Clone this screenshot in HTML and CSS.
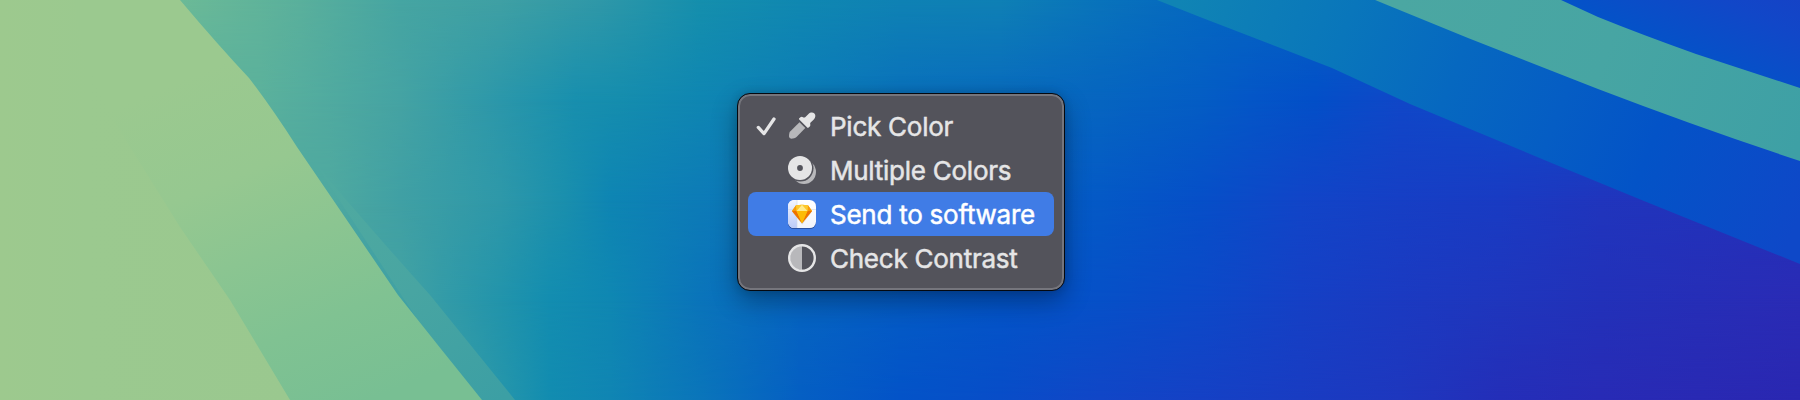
FILE: index.html
```html
<!DOCTYPE html>
<html lang="en">
<head>
<meta charset="utf-8">
<title>Color menu</title>
<link rel="stylesheet" href="styles.css">
</head>
<body>
<main class="desktop">
  <svg class="wallpaper" viewBox="0 0 1800 400" preserveAspectRatio="none" aria-hidden="true">
    <defs>
      <linearGradient id="r0" gradientUnits="userSpaceOnUse" x1="0" y1="0" x2="1800" y2="0">
        <stop offset=".1" stop-color="#6cba97"/><stop offset=".1667" stop-color="#5ab09c"/><stop offset=".2222" stop-color="#46a5a2"/><stop offset=".2778" stop-color="#3fa0a4"/><stop offset=".3333" stop-color="#2f98a8"/><stop offset=".3889" stop-color="#158fad"/><stop offset=".4444" stop-color="#1088b1"/><stop offset=".5" stop-color="#0f82b4"/><stop offset=".5556" stop-color="#0f80b5"/><stop offset=".6111" stop-color="#0973bb"/><stop offset=".6667" stop-color="#0568c0"/><stop offset=".85" stop-color="#0353c8"/><stop offset=".92" stop-color="#0f48c8"/><stop offset="1" stop-color="#193ec4"/>
      </linearGradient>
      <linearGradient id="r1" gradientUnits="userSpaceOnUse" x1="0" y1="0" x2="1800" y2="0">
        <stop offset=".1444" stop-color="#5bb19c"/><stop offset=".2222" stop-color="#45a3a3"/><stop offset=".2778" stop-color="#2b97aa"/><stop offset=".3194" stop-color="#188fae"/><stop offset=".3444" stop-color="#158dae"/><stop offset=".3889" stop-color="#0f86b2"/><stop offset=".4444" stop-color="#0c7cb7"/><stop offset=".5" stop-color="#0970bc"/><stop offset=".5556" stop-color="#086abe"/><stop offset=".6111" stop-color="#0665c0"/><stop offset=".6667" stop-color="#045dc4"/><stop offset=".6944" stop-color="#0456c7"/><stop offset=".7306" stop-color="#034fc8"/><stop offset=".7778" stop-color="#1047c8"/><stop offset=".95" stop-color="#0b4dc8"/><stop offset="1" stop-color="#1148c8"/>
      </linearGradient>
      <linearGradient id="r2" gradientUnits="userSpaceOnUse" x1="0" y1="0" x2="1800" y2="0">
        <stop offset=".1833" stop-color="#4fa9a0"/><stop offset=".2222" stop-color="#40a0a4"/><stop offset=".2778" stop-color="#2e98a9"/><stop offset=".3139" stop-color="#1a8fad"/><stop offset=".3389" stop-color="#0e85b3"/><stop offset=".3889" stop-color="#0d7bb7"/><stop offset=".4444" stop-color="#0a70bc"/><stop offset=".5" stop-color="#0766c0"/><stop offset=".5556" stop-color="#055ec4"/><stop offset=".6111" stop-color="#0459c6"/><stop offset=".6667" stop-color="#064fc8"/><stop offset=".7222" stop-color="#1145c8"/><stop offset=".7778" stop-color="#163fc5"/><stop offset=".8333" stop-color="#193bc3"/><stop offset=".8889" stop-color="#2035bd"/><stop offset="1" stop-color="#2430b9"/>
      </linearGradient>
      <linearGradient id="r3" gradientUnits="userSpaceOnUse" x1="0" y1="0" x2="1800" y2="0">
        <stop offset=".2222" stop-color="#42a2a3"/><stop offset=".25" stop-color="#319aa8"/><stop offset=".2778" stop-color="#2294ab"/><stop offset=".3056" stop-color="#138db0"/><stop offset=".3389" stop-color="#0f87b2"/><stop offset=".3889" stop-color="#0a74ba"/><stop offset=".4444" stop-color="#0664c1"/><stop offset=".5" stop-color="#045bc5"/><stop offset=".5556" stop-color="#0354c8"/><stop offset=".6111" stop-color="#0650c8"/><stop offset=".6667" stop-color="#0c49c8"/><stop offset=".7222" stop-color="#1540c5"/><stop offset=".7778" stop-color="#1b3ac1"/><stop offset=".8333" stop-color="#1f36bd"/><stop offset=".8889" stop-color="#2231b9"/><stop offset="1" stop-color="#2a2bb5"/>
      </linearGradient>
      <linearGradient id="r4" gradientUnits="userSpaceOnUse" x1="0" y1="0" x2="1800" y2="0">
        <stop offset=".25" stop-color="#3a9fa5"/><stop offset=".2861" stop-color="#2093ac"/><stop offset=".3056" stop-color="#128cb0"/><stop offset=".3389" stop-color="#1085b3"/><stop offset=".3889" stop-color="#0a75ba"/><stop offset=".4444" stop-color="#055fc3"/><stop offset=".5" stop-color="#0353c8"/><stop offset=".5556" stop-color="#084dc8"/><stop offset=".6111" stop-color="#1146c7"/><stop offset=".6667" stop-color="#1541c5"/><stop offset=".7222" stop-color="#193cc2"/><stop offset=".7778" stop-color="#1e37be"/><stop offset=".8333" stop-color="#242eb8"/><stop offset=".8889" stop-color="#282bb5"/><stop offset="1" stop-color="#2a27b1"/>
      </linearGradient>
      <linearGradient id="fade" x1="0" y1="0" x2="0" y2="1"><stop offset="0" stop-color="#fff" stop-opacity="0"/><stop offset="1" stop-color="#fff"/></linearGradient>
      <mask id="m1" style="mask-type: alpha" maskUnits="userSpaceOnUse" x="0" y="0" width="1800" height="400"><rect width="1800" height="100" fill="url(#fade)"/><rect y="100" width="1800" height="300" fill="#fff"/></mask>
      <mask id="m2" style="mask-type: alpha" maskUnits="userSpaceOnUse" x="0" y="100" width="1800" height="300"><rect y="100" width="1800" height="100" fill="url(#fade)"/><rect y="200" width="1800" height="200" fill="#fff"/></mask>
      <mask id="m3" style="mask-type: alpha" maskUnits="userSpaceOnUse" x="0" y="200" width="1800" height="200"><rect y="200" width="1800" height="100" fill="url(#fade)"/><rect y="300" width="1800" height="100" fill="#fff"/></mask>
      <mask id="m4" style="mask-type: alpha" maskUnits="userSpaceOnUse" x="0" y="300" width="1800" height="100"><rect y="300" width="1800" height="100" fill="url(#fade)"/></mask>
      <linearGradient id="sliver" gradientUnits="userSpaceOnUse" x1="329" y1="180" x2="500" y2="400"><stop offset="0" stop-color="#50aaa0"/><stop offset=".5" stop-color="#48a5a2"/><stop offset="1" stop-color="#3c9fa4"/></linearGradient>
      <linearGradient id="leaf" gradientUnits="userSpaceOnUse" x1="230" y1="60" x2="370" y2="400"><stop offset="0" stop-color="#9bc98f"/><stop offset=".3" stop-color="#96c890"/><stop offset=".52" stop-color="#8bc591"/><stop offset=".75" stop-color="#80c292"/><stop offset="1" stop-color="#78bf93"/></linearGradient>
      <linearGradient id="meadow" gradientUnits="userSpaceOnUse" x1="0" y1="0" x2="290" y2="0"><stop offset="0" stop-color="#9dc98e"/><stop offset=".3" stop-color="#9bc98f"/><stop offset="1" stop-color="#9ac88f"/></linearGradient>
      <linearGradient id="bandBlue" gradientUnits="userSpaceOnUse" x1="1180" y1="0" x2="1790" y2="240"><stop offset="0" stop-color="#1084b4"/><stop offset=".25" stop-color="#0976bb"/><stop offset=".43" stop-color="#0668c0"/><stop offset=".6" stop-color="#055dc4"/><stop offset=".75" stop-color="#0353c7"/><stop offset="1" stop-color="#0e48c8"/></linearGradient>
      <linearGradient id="bandTeal" gradientUnits="userSpaceOnUse" x1="1400" y1="0" x2="1800" y2="140"><stop offset="0" stop-color="#4ba7a2"/><stop offset=".5" stop-color="#47a5a3"/><stop offset="1" stop-color="#3ea0a5"/></linearGradient>
      <linearGradient id="corner" gradientUnits="userSpaceOnUse" x1="1660" y1="50" x2="1720" y2="-80"><stop offset="0" stop-color="#0353c8"/><stop offset=".5" stop-color="#1147c8"/><stop offset="1" stop-color="#1a3ec4"/></linearGradient>
    </defs>
    <rect width="1800" height="400" fill="url(#r0)"/>
    <rect width="1800" height="400" fill="url(#r1)" mask="url(#m1)"/>
    <rect width="1800" height="400" fill="url(#r2)" mask="url(#m2)"/>
    <rect width="1800" height="400" fill="url(#r3)" mask="url(#m3)"/>
    <rect width="1800" height="400" fill="url(#r4)" mask="url(#m4)"/>
    <path fill="url(#sliver)" d="M300 140 329 180Q385 245 430 295L515 400H470Z"/>
    <path fill="url(#leaf)" d="M0 0H180Q218 45 249 78Q272 108 297 147L398 295Q440 348 482 400H0Z"/>
    <path fill="url(#meadow)" d="M0 0H75Q80 70 132 150L180 227 230 300 290 400H0Z"/>
    <path fill="url(#corner)" d="M1550 0H1800V95L1690 60Z"/>
    <path fill="url(#bandBlue)" d="M1157 0 1200 17 1332 68 1410 104 1554 164 1644 201 1800 264V150L1375 0Z"/>
    <path fill="url(#bandTeal)" d="M1375 0 1468 38 1598 89Q1700 128 1800 161V88L1696 54Q1640 34 1598 17L1561 0Z"/>
  </svg>

  <ul class="menu" role="menu">
    <li class="item" role="menuitem">
      <svg class="check" viewBox="0 0 20 20"><path d="M2.3 11.400 8 17.600 18 3" fill="none" stroke="currentColor" stroke-width="3.300" stroke-linecap="round" stroke-linejoin="round"/></svg>
      <svg class="icon" viewBox="0 0 28 28">
        <path class="dim" d="M11.500 10.200 2.400 19.300C1.300 20.500 1 22.500 1 24.600Q1.200 26.600 3.200 26.700C5.300 26.700 7.300 26.300 8.500 25.100L17.300 16Z"/>
        <path fill="currentColor" d="M17.200 5.200 20.500 1.900C22.300.100 25 0 26.400 1.500 27.900 3 27.600 5.600 25.800 7.400L22.600 10.600Q21.800 11.500 22.300 12.500 22.600 13.600 21.800 14.400L20.600 15.600Q19.900 16.200 19.200 15.500L11.200 7.500Q10.600 6.800 11.300 6.200L12.400 5.300Q13.400 4.500 14.500 5 16 6.100 17.200 5.200Z"/>
      </svg>
      <span class="label">Pick Color</span>
    </li>
    <li class="item" role="menuitem">
      <span class="check"></span>
      <svg class="icon" viewBox="0 0 28 28">
        <circle class="dim" cx="16" cy="16" r="12"/>
        <circle class="gap" cx="12.300" cy="12.300" r="13.200"/>
        <circle cx="12" cy="12" r="12" fill="currentColor"/>
        <circle class="gap" cx="12" cy="12" r="2.900"/>
      </svg>
      <span class="label">Multiple Colors</span>
    </li>
    <li class="item selected" role="menuitem">
      <span class="check"></span>
      <svg class="icon app" viewBox="0 0 28 28">
        <defs>
          <linearGradient id="tile" x1="0" y1="0" x2="0" y2="1"><stop stop-color="#fff"/><stop offset="1" stop-color="#f2f4fb"/></linearGradient>
          <linearGradient id="tint" x1="0" y1="0" x2="0" y2="1"><stop stop-color="#f3f6ff"/><stop offset="1" stop-color="#bccbf8"/></linearGradient>
          <clipPath id="tileClip"><rect width="28" height="28" rx="6.300"/></clipPath>
        </defs>
        <g clip-path="url(#tileClip)">
          <rect width="28" height="28" fill="url(#tile)"/>
          <rect width="9" height="28" fill="url(#tint)"/>
          <path d="M9 0V28M0 9.500H28" stroke="#cfd6e8" stroke-width=".6"/>
        </g>
        <path d="M4 11.500 14.200 24.500 24 11.500Z" fill="#8c7c80" opacity=".25"/>
        <path d="M8 5.300 14 4.700 20 5.300 24 10.900 14 23.300 4 10.900Z" fill="#fdad00"/>
        <path d="M8 5.300 4 10.900H8.500Z" fill="#f79b09"/>
        <path d="M20 5.300 24 10.900H19.500Z" fill="#f79b09"/>
        <path d="M14 4.700 8 5.300 8.500 10.900Z" fill="#fdc82a"/>
        <path d="M14 4.700 20 5.300 19.500 10.900Z" fill="#fdc82a"/>
        <path d="M14 4.700 8.500 10.900H19.500Z" fill="#feea8a"/>
        <path d="M4 10.900H8.500L14 23.300Z" fill="#ee7200"/>
        <path d="M24 10.900H19.500L14 23.300Z" fill="#ee7200"/>
        <path d="M8.500 10.900H19.500L14 23.300Z" fill="#fdbb05"/>
      </svg>
      <span class="label">Send to software</span>
    </li>
    <li class="item" role="menuitem">
      <span class="check"></span>
      <svg class="icon" viewBox="0 0 28 28">
        <path class="dim" d="M14 2A12 12 0 0 0 14 26Z"/>
        <circle cx="14" cy="14" r="12.800" fill="none" stroke="currentColor" stroke-width="2.400"/>
      </svg>
      <span class="label">Check Contrast</span>
    </li>
  </ul>
</main>
</body>
</html>
```
FILE: styles.css
```css
* {
  box-sizing: border-box;
}

body {
  margin: 0;
}

.desktop {
  display: grid;
  grid-template: 400px / 1800px;
  width: 1800px;
  height: 400px;
  overflow: hidden;
  background: #0459c5;
}

.wallpaper,
.menu {
  grid-area: 1 / 1;
}

.wallpaper {
  display: block;
  width: 1800px;
  height: 400px;
}

.menu {
  z-index: 1;
  width: 328px;
  height: 198px;
  margin: 93px 0 0 737px;
  padding: 10px;
  list-style: none;
  color: #e5e5e6;
  background: #53535b;
  border: 1px solid #04080f;
  border-radius: 13px;
  box-shadow: inset 0 0 0 2px #75757c, 0 10px 26px rgba(0, 0, 0, 0.32), 0 0 8px rgba(0, 0, 0, 0.14);
}

.item {
  display: flex;
  align-items: center;
  height: 44px;
  padding-left: 8px;
  border-radius: 8px;
}

.selected {
  color: #fff;
  background: #407ce6;
}

.check {
  flex: none;
  width: 20px;
  height: 20px;
  margin-right: 12px;
}

.icon {
  flex: none;
  width: 28px;
  height: 28px;
  margin-right: 14px;
}

.app {
  overflow: visible;
  filter: drop-shadow(0 1px 0.5px rgba(20, 30, 80, 0.45));
}

.dim {
  fill: #b8b8bb;
}

.gap {
  fill: #53535b;
}

.label {
  padding-top: 1px;
  font: 400 26px/43px Inter, "Liberation Sans", sans-serif;
  letter-spacing: -0.25px;
  white-space: nowrap;
  -webkit-text-stroke: 0.5px currentColor;
}
```
